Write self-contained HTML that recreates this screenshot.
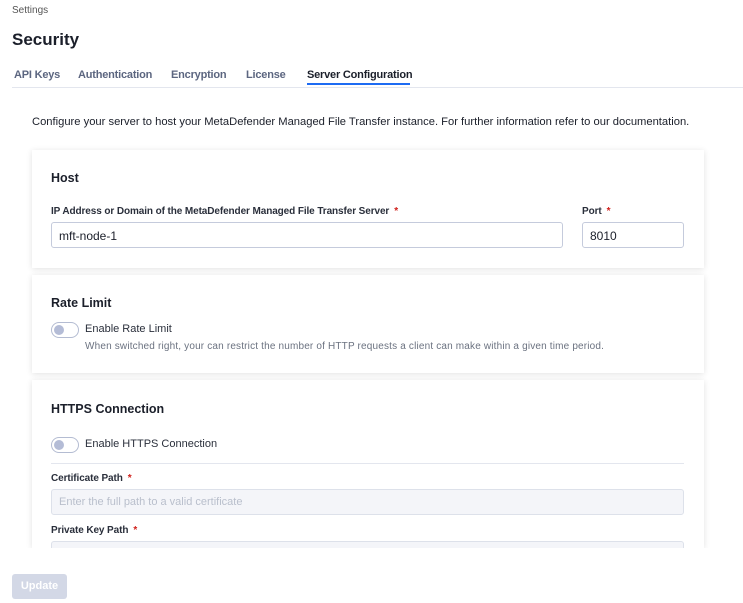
<!DOCTYPE html>
<html><head><style>
*{box-sizing:border-box;margin:0;padding:0}
body{width:743px;height:603px;overflow:hidden;background:#fff;font-family:"Liberation Sans",sans-serif;color:#1b1f2a;position:relative}
.a{position:absolute;white-space:nowrap}
.card{position:absolute;left:32px;width:672px;background:#fff;box-shadow:0 1px 6px rgba(0,0,0,0.12)}
.lbl{font-size:10px;font-weight:bold;color:#2a2f3b;letter-spacing:-0.1px}
.star{color:#d0201b;margin-left:5px}
.inp{position:absolute;border:1px solid #c5cbdc;border-radius:3px;height:26px;font-size:12px;padding:6px 7px;color:#1b1f2a}
.tog{position:absolute;width:28px;height:16px;border:1px solid #b4bcd2;border-radius:8px;background:#fff}
.tog:after{content:"";position:absolute;left:2px;top:2px;width:10px;height:10px;border-radius:50%;background:#b4bcd6}
.tab{position:absolute;top:69px;font-size:11px;font-weight:bold;color:#5c6680;letter-spacing:-0.2px;white-space:nowrap}
</style></head><body>
<div class="a" style="left:12px;top:5px;font-size:10px;color:#555">Settings</div>
<div class="a" style="left:12px;top:30px;font-size:17px;font-weight:bold">Security</div>
<div class="tab" style="left:14px">API Keys</div>
<div class="tab" style="left:78px">Authentication</div>
<div class="tab" style="left:171px">Encryption</div>
<div class="tab" style="left:246px">License</div>
<div class="tab" style="left:307px;color:#1b1f2a">Server Configuration</div>
<div class="a" style="left:307px;top:83px;width:103px;height:2px;background:#1d6bf3"></div>
<div class="a" style="left:12px;top:87px;width:731px;height:1px;background:#e3e6ee"></div>
<div class="a" style="left:32px;top:116px;font-size:11.2px;letter-spacing:0px">Configure your server to host your MetaDefender Managed File Transfer instance. For further information refer to our documentation.</div>

<div class="card" style="top:150px;height:118px">
<div class="a" style="left:19px;top:21px;font-size:12.5px;font-weight:bold">Host</div>
<div class="a lbl" style="left:19px;top:56px">IP Address or Domain of the MetaDefender Managed File Transfer Server<span class="star">*</span></div>
<div class="inp" style="left:19px;top:72px;width:512px">mft-node-1</div>
<div class="a lbl" style="left:550px;top:56px">Port<span class="star">*</span></div>
<div class="inp" style="left:550px;top:72px;width:102px">8010</div>
</div>

<div class="card" style="top:275px;height:98px">
<div class="a" style="left:19px;top:21px;font-size:12.5px;font-weight:bold">Rate Limit</div>
<div class="tog" style="left:19px;top:47px"></div>
<div class="a" style="left:53px;top:48px;font-size:11px;color:#2a2f3b">Enable Rate Limit</div>
<div class="a" style="left:53px;top:66px;font-size:10px;letter-spacing:0.17px;color:#6b7280">When switched right, your can restrict the number of HTTP requests a client can make within a given time period.</div>
</div>

<div class="card" style="top:380px;height:168px">
<div class="a" style="left:19px;top:22px;font-size:12.5px;font-weight:bold">HTTPS Connection</div>
<div class="tog" style="left:19px;top:57px"></div>
<div class="a" style="left:53px;top:58px;font-size:11px;color:#2a2f3b">Enable HTTPS Connection</div>
<div class="a" style="left:19px;top:83px;width:633px;height:1px;background:#e3e6ee"></div>
<div class="a lbl" style="left:19px;top:93px">Certificate Path<span class="star">*</span></div>
<div class="inp" style="left:19px;top:109px;width:633px;background:#f4f5f9;border-color:#dde1ea;color:#b9bfcc;font-size:11px">Enter the full path to a valid certificate</div>
<div class="a lbl" style="left:19px;top:145px">Private Key Path<span class="star">*</span></div>
<div class="inp" style="left:19px;top:161px;width:633px;background:#f4f5f9;border-color:#dde1ea"></div>
</div>
<div class="a" style="left:0;top:548px;width:743px;height:55px;background:#fff"></div>
<div class="a" style="left:12px;top:574px;width:55px;height:25px;background:#d3d8e6;border-radius:3px;color:#fff;font-size:11px;font-weight:bold;text-align:center;line-height:25px">Update</div>
</body></html>
